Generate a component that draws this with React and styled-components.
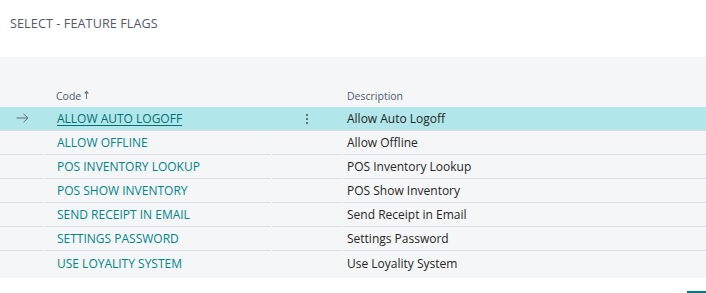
import React from "react";
import styled, {createGlobalStyle} from "styled-components";

const GlobalStyle = createGlobalStyle`
	body {
		margin: 0;
		background: #ffffff;
		font-family: "Open Sans", "Noto Sans", sans-serif;
	}
`;

const Page = styled.div`
	width: 706px;
	height: 293px;
	display: flex;
	flex-direction: column;
	position: relative;
	overflow: hidden;
`;

const Title = styled.div`
	height: 57px;
	padding: 15px 0 0 10px;
	box-sizing: border-box;
	font-size: 12.6px;
	color: #505a6a;
	letter-spacing: 0.1px;
`;

const Panel = styled.div`
	background: #f5f6f8;
	height: 221px;
	padding-top: 27px;
	box-sizing: border-box;
`;

const Row = styled.div`
	display: grid;
	grid-template-columns: 44px 226px 70px 1fr;
	column-gap: 1px;
	height: ${(p) => (p.$head ? "23px" : "24px")};
	background: ${(p) => (p.$selected ? "#b1e7ea" : "transparent")};
`;

const Cell = styled.div`
	display: flex;
	align-items: center;
	padding-left: ${(p) => p.$pad || 0}px;
	box-sizing: border-box;
	border-bottom: ${(p) => (p.$line ? "1px solid #dadcdf" : "none")};
	font-size: 12px;
	white-space: nowrap;
`;

const HeadText = styled.span`
	font-size: 10.5px;
	color: #505c6d;
`;

const SortArrow = styled.svg`
	display: block;
	margin: -2px 0 0 3px;
`;

const CodeLink = styled.span`
	color: ${(p) => (p.$selected ? "#006f73" : "#00858a")};
	text-decoration: ${(p) => (p.$selected ? "underline" : "none")};
	text-underline-offset: 2px;
`;

const Desc = styled.span`
	color: #262626;
`;

const Arrow = styled.svg`
	display: block;
	margin-top: -1px;
`;

const Dots = styled.div`
	display: flex;
	flex-direction: column;
	gap: 2px;
	margin-left: 34px;
	span {
		width: 2px;
		height: 2px;
		border-radius: 1px;
		background: #4a4f55;
	}
`;

const Corner = styled.div`
	position: absolute;
	right: 0;
	bottom: 0;
	width: 19px;
	height: 2px;
	background: #007a7e;
`;

const flags = [
	["ALLOW AUTO LOGOFF", "Allow Auto Logoff"],
	["ALLOW OFFLINE", "Allow Offline"],
	["POS INVENTORY LOOKUP", "POS Inventory Lookup"],
	["POS SHOW INVENTORY", "POS Show Inventory"],
	["SEND RECEIPT IN EMAIL", "Send Receipt in Email"],
	["SETTINGS PASSWORD", "Settings Password"],
	["USE LOYALITY SYSTEM", "Use Loyality System"],
];

const App = () => {
	return (
		<Page>
			<GlobalStyle />
			<Title>SELECT - FEATURE FLAGS</Title>
			<Panel>
				<Row $head>
					<Cell />
					<Cell $pad={11}>
						<HeadText>Code</HeadText>
						<SortArrow width="5" height="9" viewBox="0 0 5 9">
							<path d="M2.5 0.5 L5 3.5 H0 Z" fill="#6b7480" />
							<path d="M2.5 3 V9" stroke="#6b7480" strokeWidth="1" />
						</SortArrow>
					</Cell>
					<Cell />
					<Cell $pad={4}>
						<HeadText>Description</HeadText>
					</Cell>
				</Row>
				{flags.map(([code, desc], i) => {
					const selected = i === 0;
					const line = i < flags.length - 1;
					return (
						<Row key={code} $selected={selected}>
							<Cell $line={line} $pad={16}>
								{selected && (
									<Arrow width="13" height="10" viewBox="0 0 13 10">
										<path
											d="M0.5 5 H12 M7.5 0.8 L12 5 L7.5 9.2"
											fill="none"
											stroke="#626d7b"
											strokeWidth="1"
										/>
									</Arrow>
								)}
							</Cell>
							<Cell $line={line} $pad={12}>
								<CodeLink $selected={selected}>{code}</CodeLink>
							</Cell>
							<Cell $line={line}>
								{selected && (
									<Dots>
										<span />
										<span />
										<span />
									</Dots>
								)}
							</Cell>
							<Cell $line={line} $pad={4}>
								<Desc>{desc}</Desc>
							</Cell>
						</Row>
					);
				})}
			</Panel>
			<Corner />
		</Page>
	);
};

export default App;
